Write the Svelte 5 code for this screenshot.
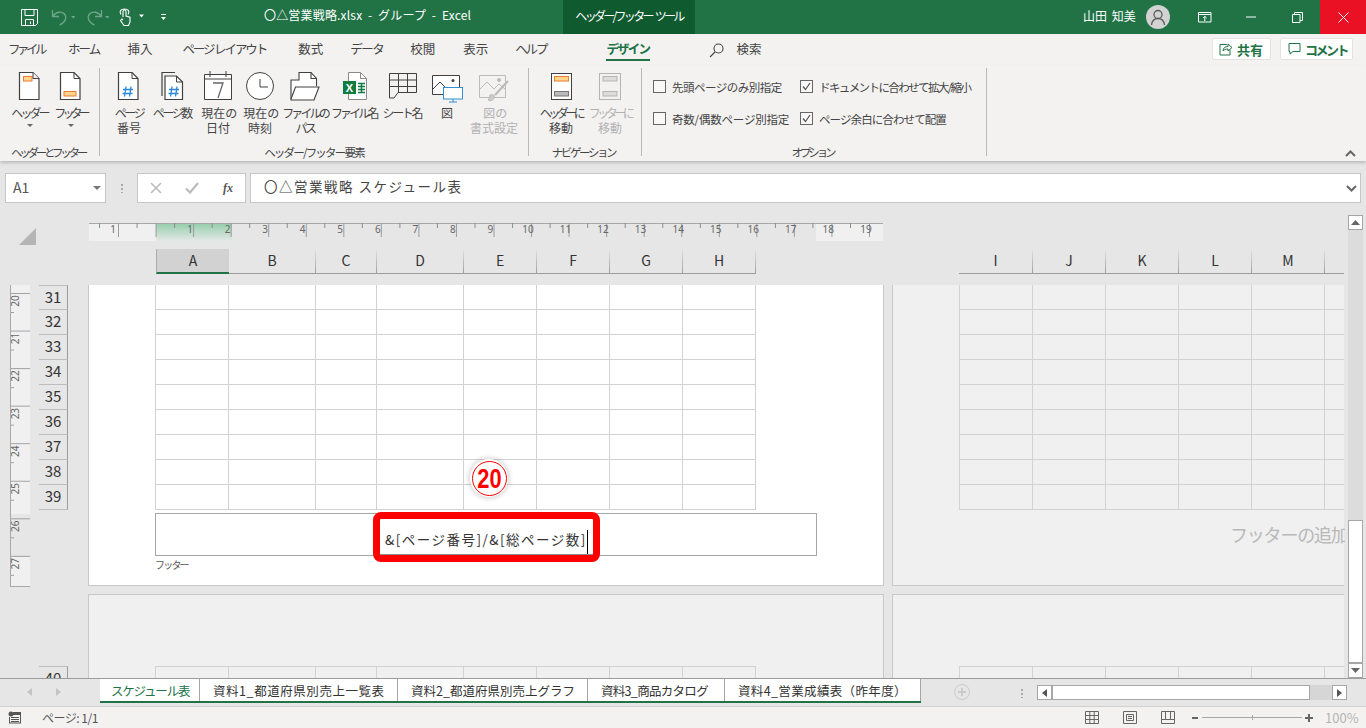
<script>
  const titleTabs = [
    { t: 'ファイル', m: 8, ls: -3.5 }, { t: 'ホーム', m: 24, ls: -1.9 }, { t: '挿入', m: 28, ls: 0 },
    { t: 'ページ レイアウト', m: 30, ls: -2.1 }, { t: '数式', m: 32, ls: 0 }, { t: 'データ', m: 27, ls: -1.5 },
    { t: '校閲', m: 27, ls: 0 }, { t: '表示', m: 28, ls: 0 }, { t: 'ヘルプ', m: 27, ls: -2.1 }
  ];
  const cols1 = [['A', 73], ['B', 87], ['C', 61], ['D', 87], ['E', 73], ['F', 73], ['G', 73], ['H', 73]];
  const cols2 = [['I', 74], ['J', 73], ['K', 73], ['L', 73], ['M', 73]];
  const rows = [31, 32, 33, 34, 35, 36, 37, 38, 39];
  const cells1 = Array(72).fill(0);
  const cells2 = Array(54).fill(0);
  const sheets = [
    { t: '資料1_都道府県別売上一覧表', w: 198, ls: 0.55 },
    { t: '資料2_都道府県別売上グラフ', w: 190, ls: 0 },
    { t: '資料3_商品カタログ', w: 137, ls: -0.7 },
    { t: '資料4_営業成績表（昨年度）', w: 196, ls: 0.35 }
  ];
  const labelsV = [20, 21, 22, 23, 24, 25, 26, 27];
  const options = [
    { t: '先頭ページのみ別指定', ls: -0.5, on: false },
    { t: 'ドキュメントに合わせて拡大/縮小', ls: -1.6, on: true },
    { t: '奇数/偶数ページ別指定', ls: -0.2, on: false },
    { t: 'ページ余白に合わせて配置', ls: -0.9, on: true }
  ];
</script>

<div class="app">
  <header class="titlebar">
    <div class="qat">
      <svg class="ic-save" width="17" height="17" viewBox="0 0 17 17" fill="none" stroke="#fff"><path d="M.5.5h16v14l-2 2H.5z"/><path d="M4 .5v6h9v-6M4.500 16.500v-6h8v6M9.500 12.500v2.500"/></svg>
      <svg class="ic-undo" width="24" height="17" viewBox="0 0 24 17" fill="none" stroke="#6fa58a" stroke-width="1.300"><path d="M1.500 1v6.500H8M1.500 7.500C5 2.500 10.500 2 13.500 5c2.500 3 1.500 8-5 11"/><path d="M20 7h4.500l-2.250 2.500z" fill="#6fa58a" stroke="none"/></svg>
      <svg class="ic-redo" width="24" height="17" viewBox="0 0 24 17" fill="none" stroke="#6fa58a" stroke-width="1.300"><path d="M15.500 1v6.500H9M15.500 7.500C12 2.500 6.500 2 3.500 5c-2.500 3-1.500 8 5 11"/><path d="M19 7h4.500l-2.250 2.500z" fill="#6fa58a" stroke="none"/></svg>
      <svg class="ic-touch" width="26" height="18" viewBox="0 0 26 18" fill="none" stroke="#fff" stroke-width="1.100"><path d="M5 9V3.500a1.500 1.500 0 0 1 3 0V8l4 1.200V14l-1.500 3.500H6L2.500 12.500 4 11l1 1M3 6.500C1 3 3 1 6.500 1S12 3 10 6.500"/><path d="M21 6.500h5l-2.500 3z" fill="#fff" stroke="none"/></svg>
      <svg class="ic-more" width="8" height="8" viewBox="0 0 8 8" fill="#fff"><path d="M1 1h5v1H1zM1 4h5L3.500 7z"/></svg>
    </div>
    <div class="doc">〇△営業戦略.xlsx &nbsp;-&nbsp; グループ &nbsp;-&nbsp; Excel</div>
    <div class="ctx">ヘッダー/フッター ツール</div>
    <div class="user">山田 知美</div>
    <div class="avatar"><svg width="24" height="24" viewBox="0 0 24 24" fill="none" stroke="#5c5c5c" stroke-width="1.300"><circle cx="12" cy="9.500" r="4"/><path d="M5.500 20c.5-4 3-6.500 6.500-6.500s6 2.500 6.500 6.500"/></svg></div>
    <div class="wc">
      <span class="wbtn"><svg width="14" height="11" viewBox="0 0 14 11" fill="none" stroke="#fff"><path d="M.5.500h12.500v9.500H.5zM.5 2.500h12.500M6.800 9V4.500M5 6l1.800-1.700L8.600 6"/></svg></span>
      <span class="wbtn"><svg width="12" height="2" viewBox="0 0 12 2"><path d="M1 1h10" stroke="#fff"/></svg></span>
      <span class="wbtn"><svg width="11" height="11" viewBox="0 0 11 11" fill="none" stroke="#fff"><path d="M.5 2.500h7.500v8H.5zM2.500 2.500v-2h8v8H8"/></svg></span>
      <span class="wbtn close"><svg width="11" height="11" viewBox="0 0 11 11" stroke="#fff"><path d="M.5.500l10 10M10.500.500l-10 10"/></svg></span>
    </div>
  </header>

  <nav class="tabs">
    {#each titleTabs as x}
      <span class="tab" style="margin-left:{x.m}px;letter-spacing:{x.ls}px">{x.t}</span>
    {/each}
    <span class="tab active">デザイン</span>
    <svg class="search" width="15" height="15" viewBox="0 0 15 15" fill="none" stroke="#444" stroke-width="1.100"><circle cx="9.500" cy="5.500" r="4.500"/><path d="M6 9l-5 5"/></svg>
    <span class="tab searchtext">検索</span>
    <div class="right">
      <button class="pill share"><svg width="14" height="14" viewBox="0 0 14 14" fill="none" stroke="#217346"><path d="M8 2.500H1v10.500h10V8M4 9c0-3 2-4.500 5-4.500V2l4 3.500L9 9V7C7 7 5 7.500 4 9z"/></svg>共有</button>
      <button class="pill comment"><svg width="13" height="14" viewBox="0 0 13 14" fill="none" stroke="#217346"><path d="M1 1.500h11v8H5L2 12V9.500H1z"/></svg>コメント</button>
    </div>
  </nav>

  <section class="ribbon">
    <div class="group g1">
      <div class="cmds">
        <div class="cmd w41">
          <svg width="24" height="32" viewBox="0 0 24 32" fill="none"><path d="M1.500 1.500h13.500l6 6v21h-19.500z" fill="#fff" stroke="#404040" stroke-width="1.200"/><rect x="5.500" y="5.500" width="8.500" height="4.500" fill="#fcd68c" stroke="#ed7d31"/><path d="M15 1.500v6h6" fill="#f3f2f1" stroke="#404040"/></svg>
          <span class="lb"><span class="n3">ヘッダー</span></span><i class="caret"></i>
        </div>
        <div class="cmd w41">
          <svg width="24" height="32" viewBox="0 0 24 32" fill="none"><path d="M1.500 1.500h13.500l6 6v21h-19.500z" fill="#fff" stroke="#404040" stroke-width="1.200"/><path d="M15 1.500v6h6" stroke="#404040"/><rect x="5" y="20.500" width="12" height="4.500" fill="#fcd68c" stroke="#ed7d31"/></svg>
          <span class="lb"><span class="n4">フッター</span></span><i class="caret"></i>
        </div>
      </div>
      <div class="gname gn1">ヘッダーとフッター</div>
    </div>
    <div class="group g2">
      <div class="cmds">
        <div class="cmd a1">
          <svg width="24" height="32" viewBox="0 0 24 32" fill="none"><path d="M1.500 1.500h13.500l6 6v21h-19.500z" fill="#fff" stroke="#404040" stroke-width="1.200"/><path d="M15 1.500v6h6" stroke="#404040"/><path d="M9 15.500l-1.500 10M14 15.500l-1.500 10M6 18.500h10M5.500 22.500h10" stroke="#2b88d8" stroke-width="1.300"/></svg>
          <span class="lb"><span class="n">ページ</span><br>番号</span>
        </div>
        <div class="cmd a2">
          <svg width="24" height="32" viewBox="0 0 24 32" fill="none"><path d="M1 25V1.500h13" stroke="#404040" stroke-width="1.200"/><path d="M4 5h11.500l6 6v17.500H4z" fill="#fff" stroke="#404040" stroke-width="1.200"/><path d="M15.500 5v6h6" stroke="#404040"/><path d="M11 15.500l-1.500 10M16 15.500l-1.500 10M8 18.500h10M7.500 22.500h10" stroke="#2b88d8" stroke-width="1.300"/></svg>
          <span class="lb"><span class="n">ページ</span>数</span>
        </div>
        <div class="cmd a3">
          <svg width="28" height="32" viewBox="0 0 28 32" fill="none" stroke="#404040"><path d="M.5 3.500h27v25H.5z" fill="#fff"/><path d="M.5 8h27M6 0v6M22 0v6"/><path d="M9 12h10l-5 15" stroke="#666" stroke-width="1.300"/></svg>
          <span class="lb">現在<span class="n">の</span><br>日付</span>
        </div>
        <div class="cmd a4">
          <svg width="28" height="32" viewBox="0 0 28 32" fill="none" stroke="#404040"><circle cx="14" cy="15" r="13.500" fill="#fff"/><path d="M14 8v8h8"/></svg>
          <span class="lb">現在<span class="n">の</span><br>時刻</span>
        </div>
        <div class="cmd a5">
          <svg width="30" height="32" viewBox="0 0 30 32" fill="none" stroke="#404040" stroke-width="1.100"><path d="M1 28V9h8V1.500h12l5.500 6V15" fill="#fff"/><path d="M21 1.500v6h5.500"/><path d="M1 28l4.500-12h23.500l-5 13H1z" fill="#fff"/></svg>
          <span class="lb"><span class="n3">ファイルの</span><br><span class="n">パス</span></span>
        </div>
        <div class="cmd a6">
          <svg width="26" height="32" viewBox="0 0 26 32" fill="none"><path d="M6.500 1.500h12l6 6v21h-18z" fill="#fff" stroke="#8a8a8a"/><path d="M18.500 1.500v6h6" stroke="#8a8a8a"/><rect x="1" y="10" width="13" height="13" fill="#107c41"/><text x="7.500" y="20.500" class="xl">X</text><path d="M16 12.500h7M16 15.500h7M16 18.500h7M16 21.500h7M19.500 12v10" stroke="#107c41" stroke-width="1.500"/></svg>
          <span class="lb"><span class="n3">ファイル</span>名</span>
        </div>
        <div class="cmd a7">
          <svg width="28" height="32" viewBox="0 0 28 32" fill="none" stroke="#404040"><path d="M.5 2.500h27v19H9l-4 5.500H.5zM.5 9h27M.5 15.500h27M9.500 2.500v19M18.500 2.500v19"/></svg>
          <span class="lb"><span class="n">シート</span>名</span>
        </div>
        <div class="cmd a8">
          <svg width="31" height="32" viewBox="0 0 31 32" fill="none"><path d="M.5 4.500h27v19H.5z" stroke="#404040" fill="#fff"/><path d="M1 18l7-7 6 6" stroke="#404040"/><circle cx="21" cy="9.500" r="1.500" fill="#404040"/><rect x="11.500" y="16.500" width="19" height="11.500" fill="#fff" stroke="#2f8fd0"/><path d="M21 28v3M17 31h8" stroke="#2f8fd0"/></svg>
          <span class="lb">図</span>
        </div>
        <div class="cmd a9 dis">
          <svg width="30" height="32" viewBox="0 0 30 32" fill="none" stroke="#bbb"><path d="M.5 4.500h26v22H.5z" fill="#f3f2f1"/><path d="M1 18l7-7 7 7 5-5 6 5"/><circle cx="20" cy="9" r="1.500" fill="#bbb"/><path d="M29 10L16 24" stroke-width="2.200"/><path d="M11 24c3-1 5 0 4 3s-5 3-6 2c2-1 1-3 2-5z" fill="#ccc"/></svg>
          <span class="lb">図<span class="n">の</span><br>書式設定</span>
        </div>
      </div>
      <div class="gname gn2">ヘッダー/フッター要素</div>
    </div>
    <div class="group g3">
      <div class="cmds">
        <div class="cmd n1c">
          <svg width="21" height="32" viewBox="0 0 21 32" fill="none"><rect x=".5" y="2.500" width="20" height="26" fill="#fff" stroke="#404040"/><rect x="3.500" y="5.500" width="14" height="4.500" fill="#fcd68c" stroke="#ed7d31"/><rect x="3.500" y="20.500" width="14" height="4.500" fill="#bbb" stroke="#777"/></svg>
          <span class="lb"><span class="n5">ヘッダーに</span><br>移動</span>
        </div>
        <div class="cmd n2c dis">
          <svg width="22" height="32" viewBox="0 0 22 32" fill="none"><rect x=".5" y="2.500" width="21" height="26" fill="#f3f2f1" stroke="#b4b4b4"/><rect x="4" y="5.500" width="14" height="4.500" fill="#ddd" stroke="#b4b4b4"/><rect x="4" y="20.500" width="14" height="4.500" fill="#ddd" stroke="#b4b4b4"/></svg>
          <span class="lb"><span class="n5">フッターに</span><br>移動</span>
        </div>
      </div>
      <div class="gname gn3">ナビゲーション</div>
    </div>
    <div class="group g4">
      <div class="opts">
        {#each options as o}
          <label class="opt">
            <span class="box">
              {#if o.on}<svg width="11" height="11" viewBox="0 0 11 11" fill="none" stroke="#555" stroke-width="1.200"><path d="M2 5.500l2.500 3L9 2"/></svg>{/if}
            </span>
            <span style="letter-spacing:{o.ls}px">{o.t}</span>
          </label>
        {/each}
      </div>
      <div class="gname gn4">オプション</div>
    </div>
    <svg class="collapse" width="11" height="7" viewBox="0 0 11 7" fill="none" stroke="#666" stroke-width="2"><path d="M1 6l4.500-4.500L10 6"/></svg>
  </section>

  <section class="fbar">
    <div class="namebox">A1<i class="caret big"></i></div>
    <div class="dots"></div>
    <div class="fbtns">
      <svg width="12" height="12" viewBox="0 0 12 12" stroke="#bcbcbc" stroke-width="1.600"><path d="M1 1l10 10M11 1L1 11"/></svg>
      <svg width="14" height="12" viewBox="0 0 14 12" fill="none" stroke="#bcbcbc" stroke-width="2.200"><path d="M1 6.500L5 10.500 13 1"/></svg>
      <span class="fx">fx</span>
    </div>
    <div class="finput">〇△営業戦略 スケジュール表
      <svg class="chev" width="11" height="7" viewBox="0 0 11 7" fill="none" stroke="#666" stroke-width="2"><path d="M1 1l4.500 4.500L10 1"/></svg>
    </div>
  </section>

  <section class="sheet">
    <div class="work">
      <div class="corner"></div>
      <svg class="hruler" width="794" height="19" viewBox="0 0 794 19">
        <defs><linearGradient id="gr" x1="0" y1="0" x2="0" y2="1"><stop offset="0" stop-color="#93cdaa"/><stop offset="1" stop-color="#e4e8e5"/></linearGradient></defs>
        <rect x="0" y="0" width="67" height="18" fill="#f0f0f0"/>
        <rect x="67" y="0" width="76" height="18" fill="url(#gr)"/>
        <rect x="727" y="0" width="67" height="18" fill="#f0f0f0"/>
        <path d="M0 .5h794" stroke="#a8a8a8"/>
        {#each Array(21) as _, i}
          <path d="M{10.5 + i * 37.55} 0v5" stroke="#8c8c8c"/>
          <path d="M{29.5 + i * 37.55} 0v14" stroke="#9c9c9c"/>
        {/each}
        <text x="24" y="10" class="rl" text-anchor="middle">1</text>
        {#each Array(19) as _, i}
          <text x="{101 + i * 37.55}" y="10" class="rl" text-anchor="middle">{i + 1}</text>
        {/each}
      </svg>

      <div class="colhead">
        <div class="heads h1">
          {#each cols1 as c, i}
            <span class="hd" class:sel={i === 0} style="width:{c[1]}px">{c[0]}</span>
          {/each}
        </div>
        <div class="heads h2">
          {#each cols2 as c}
            <span class="hd" style="width:{c[1]}px">{c[0]}</span>
          {/each}
          <span class="hd last"></span>
        </div>
      </div>

      <div class="body">
        <div class="gutter">
          <svg class="vruler" width="25" height="302" viewBox="-4 0 25 302">
            <rect x="0" y="0" width="20" height="229" fill="#f0f0f0"/>
            <rect x="0" y="272" width="20" height="30" fill="#f0f0f0"/>
            {#each Array(8) as _, i}
              <path d="M0 {8.5 + i * 37.55}h20" stroke="#a2a2a2"/>
              <path d="M0 {27.5 + i * 37.55}h4" stroke="#a2a2a2"/>
            {/each}
            <path d="M.5 0v302M0 301.500h20" stroke="#a8a8a8"/>
            {#each labelsV as n, i}
              <text class="rl" transform="translate(9 {16 + i * 37.55}) rotate(-90)" text-anchor="middle">{n}</text>
            {/each}
          </svg>
          <div class="rowheads">
            {#each rows as r}
              <div class="rh">{r}</div>
            {/each}
            <div class="rh r40">40</div>
          </div>
        </div>

        <div class="pagecol">
          <div class="page main">
            <div class="grid g-a">
              {#each cells1 as _}<i></i>{/each}
            </div>
            <div class="footerbox"></div>
            <div class="flabel">フッター</div>
            <div class="redbox">
              <span>&amp;[ページ番号]/&amp;[総ページ数]</span><b></b>
            </div>
            <div class="badge"><div class="ring"><span>20</span></div></div>
          </div>
          <div class="page next">
            <div class="grid g-a nextgrid">
              {#each Array(8) as _}<i></i>{/each}
            </div>
          </div>
        </div>

        <div class="pagecol rightcol">
          <div class="page alt">
            <div class="grid g-b">
              {#each cells2 as _}<i></i>{/each}
            </div>
            <div class="addfooter">フッターの追加</div>
          </div>
          <div class="page next alt2">
            <div class="grid g-b nextgrid">
              {#each Array(6) as _}<i></i>{/each}
            </div>
          </div>
        </div>
      </div>
    </div>

    <aside class="vscroll">
      <button class="sb"><svg width="9" height="5" viewBox="0 0 9 5" fill="#666"><path d="M4.500 0l4.500 5H0z"/></svg></button>
      <div class="vtrack"><div class="vthumb"></div></div>
      <button class="sb"><svg width="9" height="5" viewBox="0 0 9 5" fill="#666"><path d="M4.500 5L9 0H0z"/></svg></button>
    </aside>
  </section>

  <section class="tabbar">
    <div class="navs">
      <svg width="5" height="8" viewBox="0 0 5 8" fill="#c4c4c4"><path d="M5 0v8L0 4z"/></svg>
      <svg width="5" height="8" viewBox="0 0 5 8" fill="#c4c4c4"><path d="M0 0v8l5-4z"/></svg>
    </div>
    <div class="sheets">
      <span class="st on">スケジュール表</span>
      {#each sheets as s}<span class="st" style="width:{s.w}px;letter-spacing:{s.ls}px">{s.t}</span>{/each}
    </div>
    <svg class="add" width="16" height="16" viewBox="0 0 16 16" fill="none" stroke="#cbcbcb"><circle cx="8" cy="8" r="7.500"/><path d="M8 4v8M4 8h8" stroke-width="2"/></svg>
    <div class="vdots"></div>
    <div class="hscroll">
      <button class="sbh"><svg width="5" height="8" viewBox="0 0 5 8" fill="#555"><path d="M5 0v8L0 4z"/></svg></button>
      <div class="hthumb"></div>
      <div class="htrack"></div>
      <button class="sbh"><svg width="5" height="8" viewBox="0 0 5 8" fill="#555"><path d="M0 0v8l5-4z"/></svg></button>
    </div>
  </section>

  <footer class="status">
    <svg class="macro" width="13" height="13" viewBox="0 0 13 13" fill="#555"><circle cx="3" cy="3" r="2.500"/><path d="M5 1h8v11.500H1V6h1v5.500h10V4H5z"/><path d="M3 6h8v1H3zM3 8h8v1H3zM3 10h8v1H3z"/></svg>
    <span class="pg">ページ: 1/1</span>
    <div class="vm">
      <svg width="14" height="13" viewBox="0 0 14 13" fill="none" stroke="#666"><path d="M.5.500h13v12H.5zM.5 4.500h13M.5 8.500h13M4.800.500v12M9.200.500v12"/></svg>
      <svg width="14" height="13" viewBox="0 0 14 13" fill="none" stroke="#666"><path d="M.5.500h13v12H.5z"/><path d="M3.500 3.500h7v6h-7zM5 5.500h4M5 7.500h4"/></svg>
      <svg width="14" height="13" viewBox="0 0 14 13" fill="none" stroke="#666"><path d="M.5.500h13v12H.5zM.5 8.500h13M4.500.500v8M9.500.500v8"/></svg>
    </div>
    <div class="zoom">
      <i class="minus"></i>
      <div class="slider"><b></b></div>
      <i class="plus"></i>
      <span>100%</span>
    </div>
  </footer>
</div>

<style>
  :global(body) { margin: 0; background: #e6e6e6; overflow: hidden; }
  .app { width: 1366px; height: 728px; display: flex; flex-direction: column; overflow: hidden;
    font-family: "Noto Sans CJK JP", "Noto Sans", sans-serif; font-size: 12px; color: #444; }
  svg { display: block; flex: none; }
  button { font: inherit; padding: 0; cursor: default; }

  .titlebar { height: 34px; flex: none; background: #217346; color: #fff; display: flex; align-items: center; position: relative; }
  .qat { display: flex; align-items: center; width: 264px; flex: none; }
  .ic-save { margin-left: 21px; }
  .ic-undo { margin-left: 13px; }
  .ic-redo { margin-left: 11px; }
  .ic-touch { margin-left: 8px; }
  .ic-more { margin-left: 16px; }
  .doc { width: 299px; flex: none; font-size: 12px; letter-spacing: .18px; line-height: 30px; height: 34px; }
  .ctx { width: 132px; height: 34px; flex: none; background: #0f5a2f; line-height: 31px; text-align: center; letter-spacing: -2.700px; font-size: 12px; word-spacing: 3px; }
  .user { margin-left: 388px; width: 60px; font-size: 12px; word-spacing: 2px; flex: none; line-height: 32px; height: 34px; }
  .avatar { width: 24px; height: 24px; border-radius: 50%; background: #d2d2d2; overflow: hidden; margin-left: 3px; flex: none; }
  .wc { display: flex; margin-left: auto; height: 34px; }
  .wbtn { width: 46px; display: flex; align-items: center; justify-content: center; }
  .close { background: #ea1125; }

  .tabs { height: 31px; flex: none; background: #f3f2f1; display: flex; align-items: flex-start; }
  .tab { display: block; line-height: 30px; font-size: 12.500px; color: #444; white-space: nowrap; }
  .tab.active { margin-left: 60px; width: 44px; height: 25px; border-bottom: 2px solid #217346; color: #217346; font-weight: 700; letter-spacing: -1.800px; }
  .search { margin: 9px 0 0 59px; }
  .searchtext { margin-left: 12px; }
  .right { margin-left: auto; display: flex; gap: 9px; padding: 4px 13px 0 0; }
  .pill { height: 22px; border: 1px solid #e4e3e2; border-radius: 2px; background: #fff; color: #217346; font-weight: 700; display: flex; align-items: center; gap: 4px; font-size: 13px; box-sizing: border-box; white-space: nowrap; }
  .share { width: 59px; padding-left: 6px; }
  .comment { width: 73px; padding-left: 7px; letter-spacing: -2.500px; }

  .ribbon { height: 96px; flex: none; background: #f3f2f1; display: flex; position: relative; box-shadow: 0 2px 3px rgba(0,0,0,.18); z-index: 2; padding-top: 3px; box-sizing: border-box; }
  .group { height: 88px; border-right: 1px solid #b9b9b9; position: relative; flex: none; box-sizing: border-box; }
  .g1 { width: 100px; }
  .g2 { width: 429px; }
  .g3 { width: 113px; }
  .g4 { width: 345px; }
  .gname { position: absolute; left: 0; right: 0; top: 76px; text-align: center; line-height: 16px; font-size: 11.500px; white-space: nowrap; }
  .gn1 { letter-spacing: -3.300px; padding-right: 3px; }
  .gn2 { letter-spacing: -1.800px; }
  .gn3 { letter-spacing: -2.400px; padding-right: 3px; }
  .gn4 { letter-spacing: -3.100px; padding-right: 3px; }
  .cmds { display: flex; padding-top: 3px; }
  .cmd { display: grid; grid-template-rows: 34px auto; justify-items: center; flex: none; }
  .lb { font-size: 12px; line-height: 15px; text-align: center; white-space: nowrap; }
  .n { letter-spacing: -2.400px; }
  .n3 { letter-spacing: -2.900px; }
  .n4 { letter-spacing: -3.900px; }
  .n5 { letter-spacing: -3.500px; }
  .dis { color: #b1b1b1; }
  .w41 { width: 41px; }
  .g1 .cmds { padding-left: 9px; }
  .caret { display: block; width: 0; height: 0; border: 3px solid transparent; border-top: 3px solid #666; border-bottom: 0; margin-top: 4px; }
  .g2 .cmds { padding-left: 7px; }
  .a1 { width: 44px; } .a2 { width: 44px; } .a3 { width: 46px; } .a4 { width: 38px; } .a5 { width: 52px; }
  .a6 { width: 46px; } .a7 { width: 52px; } .a8 { width: 36px; } .a9 { width: 58px; }
  .xl { font: 700 11px "Liberation Sans", sans-serif; fill: #fff; text-anchor: middle; }
  .g3 .cmds { padding-left: 10px; }
  .n1c { width: 44px; } .n2c { width: 54px; }
  .opts { display: grid; grid-template-columns: 147px auto; row-gap: 9px; padding: 7px 0 0 11px; }
  .opt { display: flex; align-items: center; gap: 6px; height: 23px; white-space: nowrap; font-size: 11.500px; }
  .box { width: 13px; height: 13px; border: 1px solid #666; background: #f8f8f8; display: flex; align-items: center; justify-content: center; flex: none; box-sizing: border-box; }
  .collapse { position: absolute; right: 10px; top: 85px; }

  .fbar { height: 44px; flex: none; background: #e6e6e6; display: flex; padding-top: 12px; box-sizing: border-box; }
  .namebox { margin-left: 5px; width: 101px; height: 30px; background: #fff; border: 1px solid #c6c6c6; box-sizing: border-box; padding-left: 7px; font-size: 14px; line-height: 27px; color: #555; position: relative; }
  .caret.big { position: absolute; right: 4px; top: 12px; margin: 0; border-width: 4px; border-top: 4px solid #777; border-bottom: 0; }
  .dots { margin: 11px 0 0 15px; width: 2px; height: 9px; background: repeating-linear-gradient(#aaa 0 2px, transparent 2px 4px); }
  .fbtns { margin-left: 14px; width: 109px; height: 30px; background: #fff; border: 1px solid #c6c6c6; box-sizing: border-box; display: flex; align-items: center; padding-left: 12px; }
  .fbtns svg:nth-child(2) { margin-left: 23px; }
  .fx { font: italic 700 12px "Liberation Serif", serif; margin-left: 24px; color: #555; }
  .finput { margin-left: 4px; width: 1111px; height: 30px; background: #fff; border: 1px solid #c6c6c6; box-sizing: border-box; padding-left: 13px; font-size: 13.500px; line-height: 25px; letter-spacing: 1.500px; color: #444; position: relative; }
  .chev { position: absolute; right: 3px; top: 11px; }

  .sheet { height: 473px; flex: none; display: flex; background: #e6e6e6; overflow: hidden; }
  .work { width: 1344px; flex: none; position: relative; padding-top: 18px; box-sizing: border-box; }
  .corner { position: absolute; left: 19px; top: 23px; width: 0; height: 0; border-left: 17px solid transparent; border-bottom: 17px solid #b5b5b5; }
  .hruler { margin-left: 89px; }
  .rl { font: 10px "Noto Sans", sans-serif; fill: #666; }
  .colhead { display: flex; margin-top: 7px; height: 25px; }
  .heads { display: flex; height: 25px; border-bottom: 1px solid #9c9c9c; box-sizing: border-box; }
  .h1 { margin-left: 156px; }
  .h2 { margin-left: 203px; }
  .hd { display: block; text-align: center; font-size: 14px; line-height: 22px; color: #333; border-right: 1px solid; border-image: linear-gradient(transparent, #9c9c9c) 1; box-sizing: border-box; height: 24px; }
  .hd.sel { background: #d2d2d2; border-bottom: 2px solid #217346; height: 25px; border-left: 1px solid #aaa; border-image: none; border-right: 0; }
  .hd.last { width: 19px; border: 0; }
  .body { display: flex; margin-top: 11px; }
  .gutter { width: 88px; flex: none; display: flex; }
  .vruler { margin-left: 6px; }
  .rowheads { margin-left: 8px; width: 29px; flex: none; }
  .rh { height: 25px; width: 29px; box-sizing: border-box; text-align: center; font-size: 15px; line-height: 22px; color: #333; border-right: 1px solid #9c9c9c; border-bottom: 1px solid #bdbdbd; }
  .rh:first-child { border-top: 1px solid #bdbdbd; line-height: 21px; }
  .r40 { margin-top: 156px; border-top: 1px solid #bdbdbd; }
  .pagecol { width: 796px; flex: none; }
  .rightcol { width: 452px; margin-left: 8px; }
  .page { box-sizing: border-box; position: relative; border: 1px solid #c8c8c8; border-top: 0; height: 301px; background: #fff; padding-left: 66px; }
  .page.alt { background: #f0f0f0; border-right: 0; }
  .page.next { background: #f0f0f0; height: 90px; margin-top: 8px; border: 1px solid #c8c8c8; border-bottom: 0; padding-top: 71px; }
  .alt2 { border-right: 0 !important; }
  .grid { display: grid; border-left: 1px solid #d2d2d2; width: max-content; }
  .g-a { grid-template-columns: 73px 87px 61px 87px 73px 73px 73px 73px; }
  .g-b { grid-template-columns: 73px 73px 73px 73px 73px 19px; }
  .grid i { height: 25px; box-sizing: border-box; border-right: 1px solid #d2d2d2; border-bottom: 1px solid #d2d2d2; }
  .g-b i:nth-child(6n) { border-right: 0; }
  .nextgrid { border-top: 1px solid #d2d2d2; }
  .footerbox { width: 662px; height: 43px; margin-top: 3px; border: 1px solid #a6a6a6; box-sizing: border-box; background: #fff; }
  .flabel { font-size: 10px; line-height: 14px; margin-top: 2px; color: #555; letter-spacing: -1.800px; }
  .redbox { position: absolute; left: 284px; top: 227px; width: 227px; height: 50px; box-sizing: border-box; border: 7px solid #f00; border-radius: 8px; padding-left: 5px; font-size: 13.500px; line-height: 41px; letter-spacing: 1.500px; color: #333; white-space: nowrap; background: #fff; box-shadow: inset 0 -1px 0 #8c8c8c; display: flex; align-items: flex-start; }
  .redbox b { display: block; width: 1px; height: 24px; background: #000; margin: 11px 0 0 0; flex: none; }
  .badge { position: absolute; left: 381px; top: 174px; width: 38px; height: 38px; border-radius: 50%; background: #fff; box-shadow: 0 0 4px 2px rgba(0,0,0,.14); display: flex; align-items: center; justify-content: center; }
  .ring { width: 35px; height: 35px; border: 1px solid #f00; border-radius: 50%; box-sizing: border-box; text-align: center; }
  .ring span { display: block; color: #f00; font: 700 28px/33px "Liberation Sans", sans-serif; transform: scaleX(.78); }
  .addfooter { position: absolute; left: 337px; top: 236px; font-size: 18px; line-height: 26px; color: #b8b8b8; white-space: nowrap; letter-spacing: -1.200px; width: 115px; overflow: hidden; }

  .vscroll { width: 22px; flex: none; padding: 10px 0 0 4px; box-sizing: border-box; display: flex; flex-direction: column; height: 473px; }
  .sb { width: 15px; height: 15px; background: #fff; border: 1px solid #a6a6a6; display: flex; align-items: center; justify-content: center; flex: none; box-sizing: border-box; }
  .vtrack { flex: 1; background: #dcdcdc; width: 15px; padding-top: 290px; box-sizing: border-box; }
  .vthumb { height: 143px; background: #fff; border: 1px solid #a6a6a6; box-sizing: border-box; }

  .tabbar { height: 28px; flex: none; background: #e6e6e6; border-top: 1px solid #9c9c9c; box-sizing: border-box; display: flex; position: relative; }
  .navs { width: 100px; flex: none; display: flex; gap: 24px; padding: 9px 0 0 27px; box-sizing: border-box; }
  .sheets { display: flex; height: 22px; border-bottom: 2px solid #217346; box-sizing: content-box; flex: none; }
  .st { display: block; background: #fff; padding-left: 13px; font-size: 12.500px; line-height: 23px; color: #333; border-right: 1px solid #a6a6a6; white-space: nowrap; box-sizing: border-box; }
  .st.on { color: #217346; width: 100px; padding-left: 11px; letter-spacing: -1.200px; }
  .add { margin: 5px 0 0 33px; }
  .vdots { width: 2px; height: 9px; margin: 10px 0 0 51px; background: repeating-linear-gradient(#aaa 0 2px, transparent 2px 4px); }
  .hscroll { display: flex; margin: 6px 0 0 14px; height: 15px; }
  .sbh { width: 15px; height: 15px; background: #fff; border: 1px solid #a6a6a6; display: flex; align-items: center; justify-content: center; box-sizing: border-box; }
  .hthumb { width: 258px; background: #fff; border: 1px solid #a6a6a6; box-sizing: border-box; }
  .htrack { width: 22px; background: #d6d6d6; }

  .status { height: 22px; flex: none; background: #f3f2f1; border-top: 1px solid #d0d0d0; box-sizing: border-box; display: flex; align-items: center; padding-right: 9px; }
  .macro { margin-left: 8px; }
  .pg { margin-left: 21px; font-size: 12px; color: #555; letter-spacing: -.5px; }
  .vm { display: flex; gap: 24px; margin-left: auto; }
  .zoom { display: flex; align-items: center; margin-left: 17px; color: #b4b4b4; font-size: 13px; }
  .minus { width: 6px; height: 2px; background: #666; }
  .slider { width: 100px; height: 1px; background: #a6a6a6; margin: 0 3px 0 4px; position: relative; }
  .slider b { position: absolute; left: 50px; top: -2px; width: 1px; height: 5px; background: #a6a6a6; }
  .plus { width: 8px; height: 8px; background: linear-gradient(#666,#666) center/8px 2px no-repeat, linear-gradient(#666,#666) center/2px 8px no-repeat; }
  .zoom span { margin-left: 12px; width: 32px; white-space: nowrap; }
</style>
